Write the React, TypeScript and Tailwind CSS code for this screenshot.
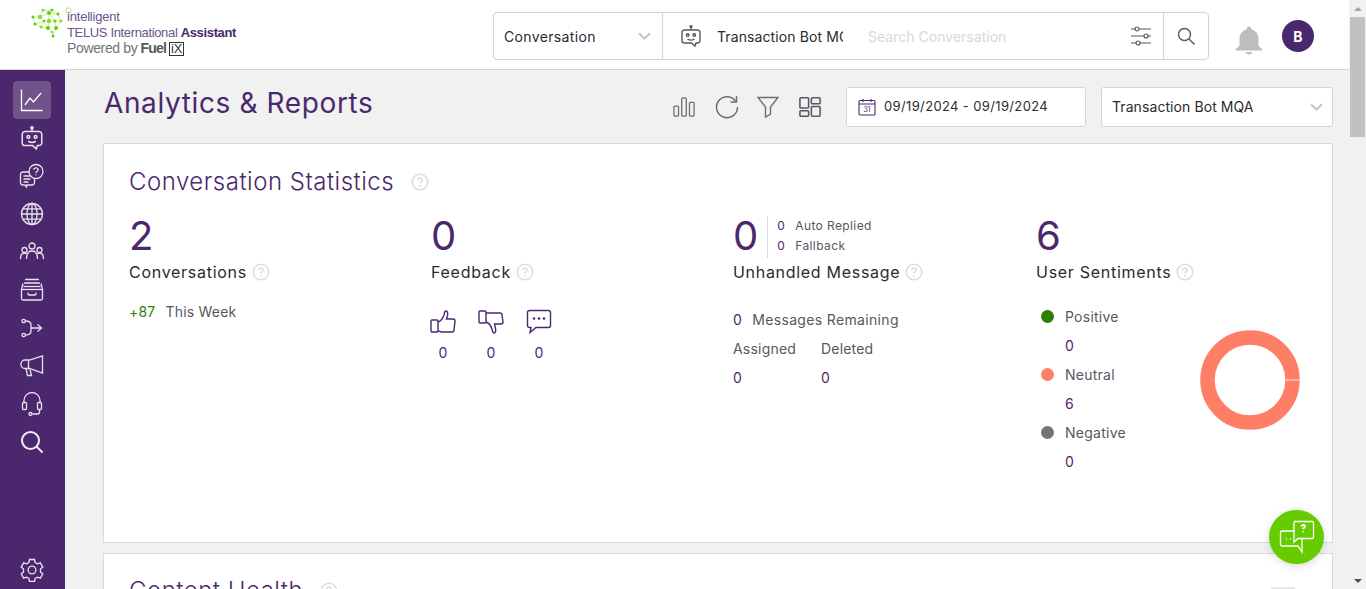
import React from 'react';

const Help = ({ size = 17 }: { size?: number }) => (
    <svg width={size} height={size} viewBox="0 0 18 18" fill="none" className="shrink-0">
        <circle cx="9" cy="9" r="7.8" stroke="#dcdcdc" strokeWidth="1.5" />
        <path d="M6.8 7.2c0-1.3 1-2.1 2.2-2.1s2.2.8 2.2 2c0 1.5-2.2 1.7-2.2 3.4" stroke="#dcdcdc" strokeWidth="1.5" />
        <circle cx="9" cy="12.9" r="0.9" fill="#dcdcdc" />
    </svg>
);

const Chevron = ({ color = '#c4c4c4' }: { color?: string }) => (
    <svg width="13" height="8" viewBox="0 0 13 8" fill="none">
        <path d="M1 1.2l5.500 5.300L12 1.200" stroke={color} strokeWidth="2" />
    </svg>
);

const BotIcon = ({ color, size = 24 }: { color: string; size?: number }) => (
    <svg width={size} height={size} viewBox="0 0 24 24" fill="none" stroke={color} strokeWidth="1.4">
        <circle cx="12" cy="2.6" r="1" fill={color} />
        <path d="M12 3.6V6" />
        <path d="M5.5 6h13A2.5 2.5 0 0 1 21 8.500v8a2.500 2.500 0 0 1-2.500 2.500H17l-1 3-3.500-3H5.500A2.500 2.500 0 0 1 3 16.500v-8A2.500 2.500 0 0 1 5.500 6z" />
        <circle cx="8.700" cy="11" r="1.300" />
        <circle cx="15.300" cy="11" r="1.300" />
        <path d="M8.500 15c2 1.300 5 1.300 7 0" />
    </svg>
);

const sideIcons: React.ReactNode[] = [
    <BotIcon color="#e8e2ee" size={26} />,
    <svg width="26" height="26" viewBox="0 0 26 26" fill="none" stroke="#e8e2ee" strokeWidth="1.3">
        <circle cx="17" cy="8.500" r="7" />
        <path d="M14.800 6.800c0-1.300 1-2 2.200-2s2.200.7 2.200 1.900c0 1.500-2.200 1.600-2.200 3.300M17 11.200v1" />
        <path d="M10.500 9H4a2.500 2.500 0 0 0-2.500 2.500v8A2.500 2.500 0 0 0 4 22h1.500l2 2v-2H13a2.500 2.500 0 0 0 2.500-2.500V16" />
        <path d="M4.500 13h7M4.500 16h7M4.500 19h5" />
    </svg>,
    <svg width="24" height="24" viewBox="0 0 24 24" fill="none" stroke="#e8e2ee" strokeWidth="1.300">
        <circle cx="12" cy="12" r="10.500" />
        <ellipse cx="12" cy="12" rx="5" ry="10.500" />
        <path d="M12 1.500v21M1.500 12h21M3 6.800h18M3 17.200h18" />
    </svg>,
    <svg width="26" height="22" viewBox="0 0 26 22" fill="none" stroke="#e8e2ee" strokeWidth="1.300">
        <circle cx="13" cy="5" r="3" />
        <circle cx="5.500" cy="9" r="2.500" />
        <circle cx="20.500" cy="9" r="2.500" />
        <path d="M7.500 18c0-5 2-8 5.500-8s5.500 3 5.500 8" />
        <path d="M1.500 18c0-3.500 1.500-6 4-6 .8 0 1.400.2 2 .6M24.500 18c0-3.500-1.500-6-4-6-.8 0-1.400.2-2 .6" />
    </svg>,
    <svg width="24" height="24" viewBox="0 0 24 24" fill="none" stroke="#e8e2ee" strokeWidth="1.300">
        <path d="M5 1.500h14M4 5h16" />
        <path d="M3.500 8.500h17" />
        <path d="M3 5.500L1.500 11.500v9A1.500 1.500 0 0 0 3 22h18a1.500 1.500 0 0 0 1.500-1.500v-9L21 5.500" />
        <path d="M1.500 11.500h21" />
        <path d="M8 14.500v1.300c0 .7.500 1.200 1.200 1.200h5.600c.7 0 1.200-.5 1.200-1.200v-1.300" />
    </svg>,
    <svg width="22" height="20" viewBox="0 0 22 20" fill="none" stroke="#e8e2ee" strokeWidth="1.300">
        <circle cx="2.700" cy="3" r="1.700" />
        <circle cx="2.700" cy="17" r="1.700" />
        <path d="M4.500 3c4 0 5.500 1.500 5.500 4v6c0 2.500-1.500 4-5.500 4M10 10h10.500M16.500 6.500l4 3.500-4 3.500" />
    </svg>,
    <svg width="26" height="24" viewBox="0 0 26 24" fill="none" stroke="#e8e2ee" strokeWidth="1.300">
        <path d="M23.500 2v17l-13-4.500H6a4 4 0 0 1-4-4V10a4 4 0 0 1 4-4h4.500z" />
        <path d="M9.500 6v8.500M7 14.500l1.500 7h4l-1.500-6" />
    </svg>,
    <svg width="22" height="26" viewBox="0 0 22 26" fill="none" stroke="#e8e2ee" strokeWidth="1.300">
        <path d="M3 12V9.500a8 8 0 0 1 16 0V12" />
        <rect x="1.500" y="11.500" width="4" height="7" rx="1" />
        <rect x="16.500" y="11.500" width="4" height="7" rx="1" />
        <path d="M18.500 18.500v2.500a2 2 0 0 1-2 2h-5" />
        <circle cx="9.500" cy="23" r="1.500" />
    </svg>,
    <svg width="24" height="24" viewBox="0 0 24 24" fill="none" stroke="#f0ecf4" strokeWidth="2">
        <circle cx="10.500" cy="10.500" r="8.500" />
        <path d="M16.500 16.500l6 6" />
    </svg>,
];

const brainNodes = [
    [12, 2, 1.5], [21, 2, 1.5], [27, 6, 1.5], [30, 13, 1.5], [25, 20, 2], [17, 20, 2], [9, 9, 2.2], [2, 9, 1.5],
    [4, 16, 1.5], [10, 19, 1.5], [18, 5, 2], [22, 28, 1.5], [18, 13, 2.2], [24, 13, 1.5], [13, 13, 1.3], [21, 24, 1.3],
];

const Logo = () => (
    <svg width="33" height="30" viewBox="0 0 33 30" fill="none" className="absolute left-[31px] top-[8px]">
        <path
            d="M2 9L9 9L12 2L21 2L27 6L30 13L25 20L22 28L21 24L17 20L10 19L4 16L2 9M12 2L18 5L27 6M9 9L18 5L24 13L30 13M9 9L13 13L18 13L24 13L25 20M4 16L13 13L10 19M13 13L17 20L18 13L18 5M21 2L18 5"
            stroke="#b5e384"
            strokeWidth="0.7"
        />
        {brainNodes.map(([x, y, r], i) => (
            <circle key={i} cx={x} cy={y} r={r} fill={i % 3 === 0 ? '#8fd63f' : '#66cc00'} />
        ))}
    </svg>
);

const App: React.FC = () => {
    return (
        <div className="relative flex h-[589px] w-[1366px] overflow-hidden bg-white font-['Inter',sans-serif] text-[#2a2c2e]">
            <div className="flex w-[1349px] shrink-0 flex-col">
                {/* top bar */}
                <header className="relative flex h-[70px] shrink-0 items-center border-b border-[#d4d4d4] bg-white pl-[493px] pt-[3px]">
                    <Logo />
                    <svg width="7" height="7" viewBox="0 0 7 7" fill="none" className="absolute left-[65px] top-[7px]">
                        <circle cx="3.500" cy="3.500" r="2.700" stroke="#b5e384" />
                    </svg>
                    <div className="absolute left-[67px] top-[9px] font-['Liberation_Sans',sans-serif] text-[#4b286d]">
                        <div className="text-[13px] leading-[16px] tracking-[-0.2px] text-[#6b5489]">intelligent</div>
                        <div className="text-[13px] leading-[15px] tracking-[-0.35px] text-[#6b5489]">
                            TELUS International <span className="font-bold text-[#4b286d]">Assistant</span>
                        </div>
                        <div className="flex items-center text-[14px] leading-[17px] tracking-[-0.35px] text-[#71757b]">
                            Powered by
                            <span className="ml-[3px] font-bold tracking-[-0.8px] text-[#54595f]">Fuel</span>
                            <span className="ml-[3px] flex h-[14px] w-[15px] items-center justify-center border border-[#333] text-[13px] leading-none text-[#333]">iX</span>
                        </div>
                    </div>
                    <div className="flex h-[48px] w-[716px] items-stretch rounded-[4px] border border-[#d4d4d4]">
                        <div className="flex w-[169px] items-center justify-between border-r border-[#d4d4d4] pl-[10px] pr-[11px]">
                            <span className="pt-[1px] text-[14px] tracking-[0.35px] text-[#2a2c2e]">Conversation</span>
                            <Chevron />
                        </div>
                        <div className="flex flex-1 items-center pl-[16px]">
                            <BotIcon color="#54595f" size={24} />
                            <span className="ml-[14px] w-[126px] overflow-hidden whitespace-nowrap pt-[1px] text-[14px] tracking-[0.1px] text-[#2a2c2e]">Transaction Bot MQA</span>
                            <span className="ml-[25px] flex-1 pt-[1px] text-[14px] tracking-[0.02px] text-[#d8d8d8]">Search Conversation</span>
                            <svg width="22" height="20" viewBox="0 0 22 20" fill="none" stroke="#54595f" strokeWidth="1.200" className="mr-[11px]">
                                <path d="M1 3h4.500M9 3h12M1 10h13M18 10h3M1 17h5.500M10 17h11" />
                                <circle cx="7" cy="3" r="2" />
                                <circle cx="16" cy="10" r="2" />
                                <circle cx="8" cy="17" r="2" />
                            </svg>
                            <div className="flex h-full w-[45px] items-center justify-center border-l border-[#d4d4d4]">
                                <svg width="18" height="18" viewBox="0 0 18 18" fill="none" stroke="#54595f" strokeWidth="1.400">
                                    <circle cx="7.500" cy="7.500" r="6" />
                                    <path d="M12 12l5.500 5.500" />
                                </svg>
                            </div>
                        </div>
                    </div>
                    <svg width="28" height="30" viewBox="0 0 28 30" fill="#bdbdbd" className="ml-[26px] mt-[8px]">
                        <path d="M14 1.500a2.200 2.200 0 0 1 2.200 2.200v.6C21 5.500 23.500 9.500 23.500 14v6.500L27 24v1.500H1V24l3.500-3.500V14c0-4.500 2.500-8.500 7.300-9.700v-.6A2.200 2.200 0 0 1 14 1.500z" />
                        <path d="M10.500 27h7c-.6 1.500-2 2.500-3.500 2.500s-2.900-1-3.500-2.500z" />
                    </svg>
                    <div className="ml-[19px] flex h-[32px] w-[32px] items-center justify-center rounded-full bg-[#4b286d] text-[14px] font-bold text-white">B</div>
                </header>

                <div className="flex min-h-0 flex-1">
                    {/* side nav */}
                    <nav className="flex w-[65px] shrink-0 flex-col items-center bg-[#4b286d] pr-[1px] pt-[11px]">
                        <div className="flex h-[38px] w-[38px] items-center justify-center rounded-[4px] bg-white/20">
                            <svg width="24" height="24" viewBox="0 0 24 24" fill="none" stroke="#fff" strokeWidth="1.300">
                                <path d="M1.500 1.500v21h21" />
                                <path d="M5 17l5-7 3.500 4L21 5" />
                            </svg>
                        </div>
                        {sideIcons.map((icon, i) => (
                            <div key={i} className="flex h-[38px] w-[38px] items-center justify-center">{icon}</div>
                        ))}
                        <div className="mt-auto flex h-[38px] items-center justify-center pb-[1px]">
                            <svg width="24" height="24" viewBox="0 0 24 24" fill="none" stroke="#e8e2ee" strokeWidth="1.300">
                                <circle cx="12" cy="12" r="3.800" />
                                <path d="M9.500 1.500h5l.6 3 2.300 1.300 2.900-1 2.500 4.300-2.300 2v2.800l2.300 2-2.500 4.300-2.900-1-2.300 1.300-.6 3h-5l-.6-3-2.300-1.300-2.900 1-2.500-4.300 2.300-2v-2.800l-2.300-2 2.500-4.300 2.900 1 2.300-1.300z" />
                            </svg>
                        </div>
                    </nav>

                    {/* main */}
                    <main className="min-w-0 flex-1 overflow-hidden bg-[#f1f1f1] pl-[38px] pr-[16px]">
                        <div className="flex h-[73px] items-start pt-[17px]">
                            <h1 className="-mt-[2px] flex-1 pl-[1px] text-[28px] font-normal leading-[36px] tracking-[0.62px] text-[#4b286d]">Analytics &amp; Reports</h1>
                            <div className="mr-[25px] flex h-[40px] items-center">
                                <svg width="22" height="22" viewBox="0 0 24 22" fill="none" stroke="#6a6e74" strokeWidth="1.400">
                                    <rect x="1" y="10" width="5" height="11" rx="1" />
                                    <rect x="9.500" y="1" width="5" height="20" rx="1" />
                                    <rect x="18" y="6" width="5" height="15" rx="1" />
                                </svg>
                                <svg width="24" height="24" viewBox="0 0 24 24" fill="none" stroke="#6a6e74" strokeWidth="1.500" className="ml-[20px]">
                                    <path d="M20.500 6A10.500 10.500 0 1 0 22.500 12" />
                                    <path d="M21.500 1v6h-6" />
                                </svg>
                                <svg width="22" height="22" viewBox="0 0 22 22" fill="none" stroke="#6a6e74" strokeWidth="1.400" className="ml-[18px]">
                                    <path d="M1 1.500h20l-7.500 9.500v7l-5 3V11z" />
                                </svg>
                                <svg width="22" height="22" viewBox="0 0 24 22" fill="none" stroke="#54595f" strokeWidth="1.700" className="ml-[20px]">
                                    <rect x="1" y="1" width="9.500" height="11" rx="1" />
                                    <rect x="13.500" y="1" width="9.500" height="6.500" rx="1" />
                                    <rect x="1" y="15" width="9.500" height="6" rx="1" />
                                    <rect x="13.500" y="10.500" width="9.500" height="10.500" rx="1" />
                                </svg>
                            </div>
                            <div className="flex h-[40px] w-[240px] items-center rounded-[3px] border border-[#d4d4d4] bg-white pl-[11px]">
                                <svg width="18" height="18" viewBox="0 0 18 18" fill="none" stroke="#4b286d" strokeWidth="1.100">
                                    <rect x="1" y="2.500" width="16" height="14.500" rx="1" />
                                    <path d="M1 6h16M5 1v3M13 1v3" />
                                    <text x="9" y="14" fontSize="7" fill="#4b286d" stroke="none" textAnchor="middle">31</text>
                                </svg>
                                <span className="ml-[8px] text-[13px] tracking-[0.36px]">09/19/2024 - 09/19/2024</span>
                            </div>
                            <div className="ml-[15px] flex h-[40px] w-[232px] items-center justify-between rounded-[3px] border border-[#d4d4d4] bg-white pl-[10px] pr-[9px]">
                                <span className="-mt-[1px] text-[14px] tracking-[0.08px]">Transaction Bot MQA</span>
                                <Chevron />
                            </div>
                        </div>

                        <section className="h-[400px] border border-[#d9d9d9] bg-white pl-[25px] pt-[22px]">
                            <h2 className="flex items-center text-[24px] font-light leading-[32px] tracking-[0.5px] text-[#4b286d]">
                                Conversation Statistics
                                <span className="ml-[17px]"><Help size={18} /></span>
                            </h2>
                            <div className="mt-[14px] grid grid-cols-[302px_302px_303px_1fr]">
                                <div>
                                    <div className="text-[40px] font-normal leading-[48px] text-[#4b286d]">2</div>
                                    <div className="flex items-center gap-[5px] text-[16px] leading-[24px] tracking-[0.72px]">Conversations <Help size={18} /></div>
                                    <div className="mt-[18px] text-[14px] leading-[20px] tracking-[0.2px] text-[#54595f]"><span className="mr-[10px] text-[#2b8000]">+87</span>This Week</div>
                                </div>
                                <div>
                                    <div className="text-[40px] font-normal leading-[48px] text-[#4b286d]">0</div>
                                    <div className="flex items-center gap-[5px] text-[16px] leading-[24px] tracking-[0.72px]">Feedback <Help size={18} /></div>
                                    <div className="mt-[25px] flex">
                                        {[
                                            <svg width="26" height="25" viewBox="0 0 26 25" fill="none" stroke="#4b286d" strokeWidth="1.400"><rect x="1" y="11" width="7" height="12" rx="1" /><path d="M8 13c3-1 5-4 6-7 .5-2 .5-4 2-4s2 2 1.500 4.500L16.500 10H23a2 2 0 0 1 2 2l-1 9a2 2 0 0 1-2 2H12c-2 0-2.500-1-4-1" /></svg>,
                                            <svg width="26" height="25" viewBox="0 0 26 25" fill="none" stroke="#4b286d" strokeWidth="1.400"><rect x="1" y="2" width="7" height="12" rx="1" /><path d="M8 4h14a2 2 0 0 1 2 2l1 7a2 2 0 0 1-2 2h-6.500l1 4.500c.5 2.500 0 4.500-1.500 4.500s-1.500-2-2-4c-1-3-3-6-6-7" /></svg>,
                                            <svg width="26" height="25" viewBox="0 0 26 25" fill="#4b286d" stroke="#4b286d" strokeWidth="1.400"><path fill="none" d="M3.500 1.500h19a2 2 0 0 1 2 2v13a2 2 0 0 1-2 2H10l-6 5 1-5H3.500a2 2 0 0 1-2-2v-13a2 2 0 0 1 2-2z" /><circle cx="8" cy="9.500" r="1.300" stroke="none" /><circle cx="13" cy="9.500" r="1.300" stroke="none" /><circle cx="18" cy="9.500" r="1.300" stroke="none" /></svg>,
                                        ].map((icon, i) => (
                                            <div key={i} className="flex w-[48px] flex-col items-center pr-[24px]">
                                                {icon}
                                                <span className="mt-[9px] text-[14px] leading-[20px] text-[#4b286d]">0</span>
                                            </div>
                                        ))}
                                    </div>
                                </div>
                                <div>
                                    <div className="flex h-[48px]">
                                        <div className="text-[40px] font-normal leading-[48px] text-[#4b286d]">0</div>
                                        <div className="ml-[9px] mt-[4px] h-[42px] border-l border-[#d9d9d9] pl-[9px] text-[12px] leading-[20px] tracking-[0.4px] text-[#54595f]">
                                            <div><span className="mr-[10px] text-[#4b286d]">0</span>Auto Replied</div>
                                            <div><span className="mr-[10px] text-[#4b286d]">0</span>Fallback</div>
                                        </div>
                                    </div>
                                    <div className="flex items-center gap-[5px] text-[16px] leading-[24px] tracking-[0.7px]">Unhandled Message <Help size={18} /></div>
                                    <div className="mt-[26px] text-[14px] leading-[20px] tracking-[0.34px] text-[#54595f]"><span className="mr-[10px] text-[#4b286d]">0</span>Messages Remaining</div>
                                    <div className="mt-[4px] grid w-[130px] grid-cols-[88px_1fr] text-[14px] leading-[29px] tracking-[0.2px] text-[#54595f]">
                                        <span>Assigned</span>
                                        <span>Deleted</span>
                                        <span className="text-[#4b286d]">0</span>
                                        <span className="text-[#4b286d]">0</span>
                                    </div>
                                </div>
                                <div>
                                    <div className="text-[40px] font-normal leading-[48px] text-[#4b286d]">6</div>
                                    <div className="flex items-center gap-[5px] text-[16px] leading-[24px] tracking-[0.72px]">User Sentiments <Help size={18} /></div>
                                    <div className="mt-[18px] flex">
                                        <div className="w-[164px] pl-[5px] text-[14px] leading-[29px] tracking-[0.25px] text-[#54595f]">
                                            {[
                                                { name: 'Positive', value: 0, dot: 'bg-[#2b8000]' },
                                                { name: 'Neutral', value: 6, dot: 'bg-[#ff7f66]' },
                                                { name: 'Negative', value: 0, dot: 'bg-[#71757b]' },
                                            ].map((row) => (
                                                <div key={row.name}>
                                                    <div className="flex items-center">
                                                        <span className={`mr-[11px] h-[13px] w-[13px] rounded-full ${row.dot}`} />
                                                        {row.name}
                                                    </div>
                                                    <div className="pl-[24px] text-[#4b286d]">{row.value}</div>
                                                </div>
                                            ))}
                                        </div>
                                        <svg width="100" height="100" viewBox="0 0 100 100" className="mt-[28px] shrink-0">
                                            <circle cx="50" cy="50" r="42.500" fill="none" stroke="#ff7f66" strokeWidth="14.500" />
                                            <path d="M85 50H100" stroke="#ffe3dd" strokeWidth="1" />
                                        </svg>
                                    </div>
                                </div>
                            </div>
                        </section>

                        <section className="mt-[10px] h-[200px] border border-[#d9d9d9] bg-white pl-[25px] pt-[21px]">
                            <h2 className="flex items-center text-[24px] font-light leading-[32px] tracking-[0.5px] text-[#4b286d]">
                                Content Health
                                <span className="ml-[17px]"><Help size={18} /></span>
                                <span className="ml-auto mr-[37px] mt-[12px] h-[4px] w-[24px] self-start bg-[#e8e8e8]" />
                            </h2>
                        </section>
                    </main>
                </div>
            </div>

            {/* scrollbar */}
            <div className="flex w-[17px] shrink-0 flex-col items-center bg-[#f1f1f1]">
                <div className="flex h-[17px] items-center justify-center">
                    <div className="h-0 w-0 border-x-[4px] border-b-[4px] border-x-transparent border-b-[#a3a3a3]" />
                </div>
                <div className="h-[120px] w-[15px] bg-[#c1c1c1]" />
                <div className="mt-auto flex h-[17px] items-center justify-center">
                    <div className="h-0 w-0 border-x-[4px] border-t-[4px] border-x-transparent border-t-[#505050]" />
                </div>
            </div>

            {/* floating chat */}
            <button className="absolute left-[1269px] top-[510px] flex h-[54px] w-[55px] items-center justify-center rounded-full bg-[#66cc00] shadow-[0_2px_8px_rgba(0,0,0,0.15)]">
                <svg width="36" height="34" viewBox="0 0 36 34" fill="none" stroke="#fff" strokeWidth="1.300">
                    <path d="M15 1.500h18a1.500 1.500 0 0 1 1.500 1.500v14a1.500 1.500 0 0 1-1.500 1.500H19l-4 3.500V3A1.500 1.500 0 0 1 16.500 1.500z" />
                    <path d="M15 11H3a1.500 1.500 0 0 0-1.500 1.500v12A1.500 1.500 0 0 0 3 26h16l4 6V18.500" />
                    <path d="M22.500 6.500c0-1 .8-1.500 1.700-1.500s1.700.6 1.700 1.500c0 1.200-1.700 1.300-1.700 2.700M24.200 11v1.200" strokeWidth="1.800" />
                    <path d="M7 19h1M11 19h1" />
                </svg>
            </button>
        </div>
    );
};

export default App;
